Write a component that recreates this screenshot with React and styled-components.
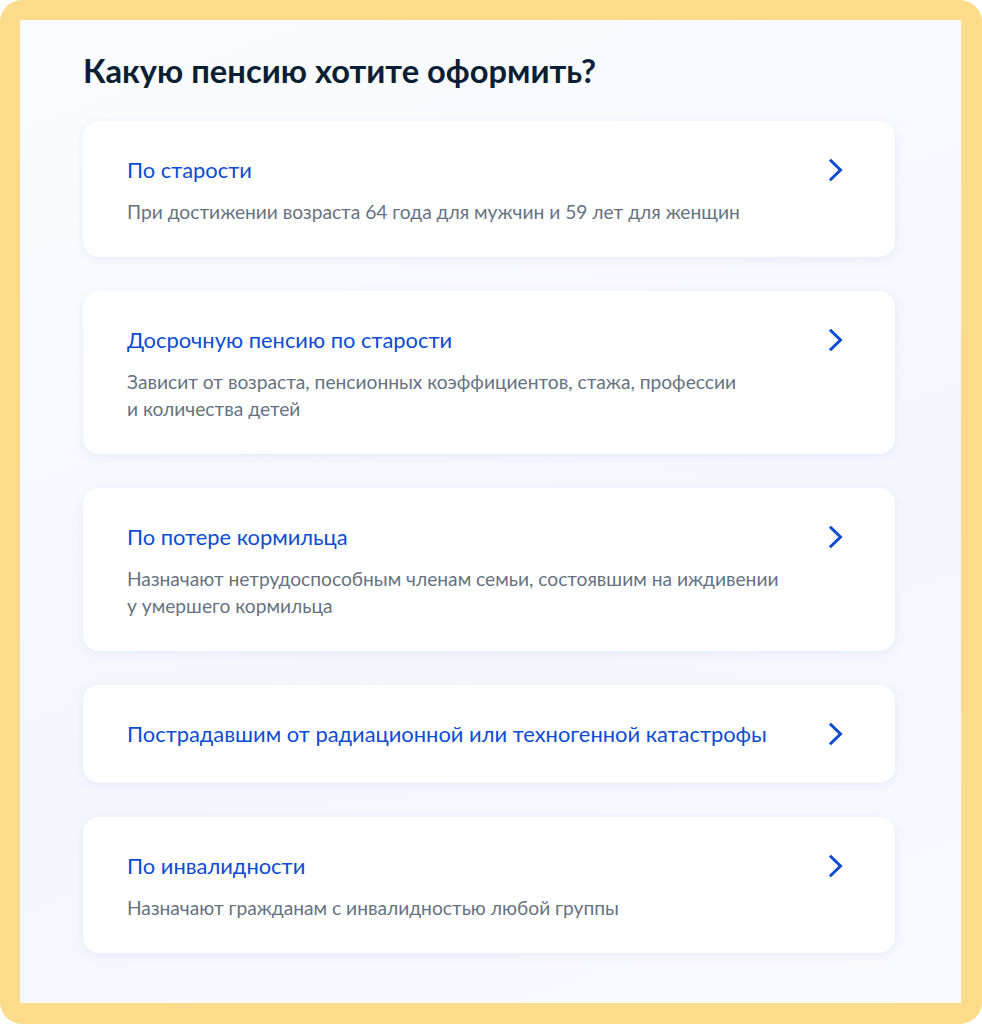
import styled, { createGlobalStyle } from "styled-components";

const GlobalStyle = createGlobalStyle`
    html, body {
        margin: 0;
        padding: 0;
        background: #ffffff;
    }
    * {
        box-sizing: border-box;
    }
`;

const items = [
    {
        title: "По старости",
        text: ["При достижении возраста 64 года для мужчин и 59 лет для женщин"],
    },
    {
        title: "Досрочную пенсию по старости",
        text: [
            "Зависит от возраста, пенсионных коэффициентов, стажа, профессии",
            "и количества детей",
        ],
    },
    {
        title: "По потере кормильца",
        text: [
            "Назначают нетрудоспособным членам семьи, состоявшим на иждивении",
            "у умершего кормильца",
        ],
    },
    {
        title: "Пострадавшим от радиационной или техногенной катастрофы",
        text: [],
    },
    {
        title: "По инвалидности",
        text: ["Назначают гражданам с инвалидностью любой группы"],
    },
];

function Chevron() {
    return (
        <svg width="24" height="24" viewBox="0 0 24 24" fill="none">
            <path
                d="M7 1.8 L16.5 11 L7 20.2"
                stroke="#0D4CD3"
                strokeWidth="3"
                strokeLinecap="square"
                strokeLinejoin="miter"
            />
        </svg>
    );
}

function App() {
    return (
        <>
            <GlobalStyle />
            <Frame>
                <Panel>
                    <Heading>Какую пенсию хотите оформить?</Heading>
                    <List>
                        {items.map((item) => (
                            <Card key={item.title} compact={item.text.length === 0}>
                                <Body>
                                    <Title>{item.title}</Title>
                                    {item.text.length > 0 && (
                                        <Desc>
                                            {item.text.map((line, i) => (
                                                <span key={i}>{line}</span>
                                            ))}
                                        </Desc>
                                    )}
                                </Body>
                                <Arrow>
                                    <Chevron />
                                </Arrow>
                            </Card>
                        ))}
                    </List>
                </Panel>
            </Frame>
        </>
    );
}

export default App;

const Frame = styled.div`
    width: 982px;
    height: 1024px;
    background-color: #fcdb8a;
    border-radius: 22px;
    padding: 20px 21px 21px 20px;
`;

const Panel = styled.div`
    width: 100%;
    height: 100%;
    background: linear-gradient(160deg, #fafcff 0%, #f5f7fe 60%, #f8faff 100%);
    padding: 31px 66px 0 63px;
    font-family: Lato, "Noto Sans", sans-serif;
`;

const Heading = styled.h1`
    margin: 0;
    font-size: 32.7px;
    line-height: 40px;
    font-weight: 700;
    color: #0b1f33;
`;

const List = styled.div`
    display: flex;
    flex-direction: column;
    gap: 34px;
    margin-top: 30px;
`;

const Card = styled.div`
    display: flex;
    align-items: flex-start;
    justify-content: space-between;
    background-color: #ffffff;
    border-radius: 16px;
    box-shadow: 0 2px 10px rgba(130, 150, 220, 0.14);
    padding: 35px 47px ${(props) => (props.compact ? "35px" : "32px")} 44px;
`;

const Body = styled.div`
    display: flex;
    flex-direction: column;
    gap: 14px;
`;

const Title = styled.div`
    font-size: 21.9px;
    line-height: 28px;
    color: #0d4cd3;
`;

const Desc = styled.div`
    display: flex;
    flex-direction: column;
    font-size: 19.2px;
    line-height: 27px;
    color: #66727f;
`;

const Arrow = styled.div`
    width: 24px;
    height: 24px;
    margin-top: 3px;
    display: flex;
`;
